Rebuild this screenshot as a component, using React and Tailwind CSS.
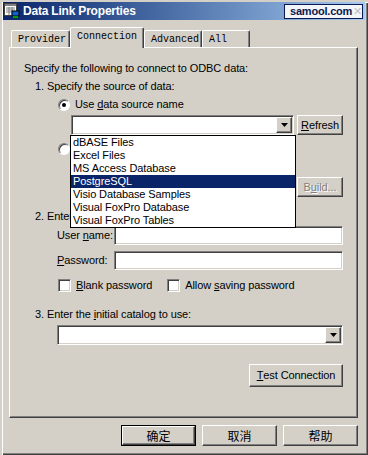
import React from 'react';

const sunken = 'border border-t-[#808080] border-l-[#808080] border-b-white border-r-white shadow-[inset_1px_1px_0_#404040,inset_-1px_-1px_0_#d4d0c8]';
const raised = 'border border-t-white border-l-white border-b-[#404040] border-r-[#404040] shadow-[inset_-1px_-1px_0_#808080]';

const U = ({ children }) => <span className="underline underline-offset-[1px]">{children}</span>;

const DropButton = () => (
  <div className={`w-[16px] h-[16px] mr-[1px] flex items-center justify-center bg-[#d4d0c8] ${raised}`}>
    <svg width="7" height="4" viewBox="0 0 7 4"><path d="M0 0h7L3.5 4z" fill="#000" /></svg>
  </div>
);

const Combo = ({ className }) => (
  <div className={`h-[20px] bg-white flex items-center justify-end ${sunken} ${className}`}>
    <DropButton />
  </div>
);

const Radio = ({ checked }) => (
  <div className="w-[12px] h-[12px] rounded-full bg-white border border-t-[#808080] border-l-[#808080] border-b-white border-r-white flex items-center justify-center shadow-[inset_1px_1px_0_#404040]">
    {checked && <div className="w-[4px] h-[4px] rounded-full bg-black" />}
  </div>
);

const Check = () => <div className={`w-[13px] h-[13px] bg-white ${sunken}`} />;

const Btn = ({ children, className, disabled }) => (
  <div className={`flex items-center justify-center bg-[#d4d0c8] ${raised} ${className} ${disabled ? 'text-[#808080] [text-shadow:1px_1px_0_#fff]' : ''}`}>
    {children}
  </div>
);

const Tab = ({ label, active, w }) => (
  <div
    className={`${w} flex items-center bg-[#d4d0c8] border-t border-l border-t-white border-l-white border-r border-r-[#404040] shadow-[inset_-1px_0_0_#808080] rounded-tl-[2px] rounded-tr-[2px] ${
      active ? 'h-[21px] -mb-px z-10 pl-[6px] pb-[3px]' : 'h-[17px] pl-[6px]'
    }`}
  >
    {label}
  </div>
);

const items = [
  'dBASE Files',
  'Excel Files',
  'MS Access Database',
  'PostgreSQL',
  'Visio Database Samples',
  'Visual FoxPro Database',
  'Visual FoxPro Tables',
];

export default function App() {
  return (
    <div
      className="relative w-[368px] h-[455px] overflow-hidden bg-[#d4d0c8] text-[11px] leading-[13px] tracking-[-0.1px] text-black shadow-[inset_2px_2px_0_#d4d0c8,inset_3px_3px_0_#fff,inset_-1px_-1px_0_#404040,inset_-2px_-2px_0_#808080]"
      style={{ fontFamily: '"Liberation Sans", Arial, sans-serif' }}
    >
      {/* title bar */}
      <div className="mt-[2px] mx-[3px] h-[18px] flex items-center bg-gradient-to-r from-[#0a246a] to-[#a6caf0] tracking-normal">
        <svg width="16" height="16" viewBox="0 0 16 16" className="ml-[1px]">
          <rect x="0.5" y="0.5" width="12" height="12" fill="#fff" stroke="#404040" />
          <rect x="1" y="1" width="11" height="2" fill="#808080" />
          <path d="M2 5h9M2 7h9M2 9h9M5 4v8M8 4v8" stroke="#808080" strokeWidth="1" />
          <rect x="8" y="8" width="7" height="5" fill="#1060d0" stroke="#000" strokeWidth="1" />
          <rect x="9" y="13" width="5" height="2" fill="#00a000" />
        </svg>
        <span className="ml-[3px] text-white font-bold text-[12px] tracking-[-0.2px]">Data Link Properties</span>
        <div className="ml-auto mr-[2px] w-[79px] h-[15px] bg-[#f4f5f8] border border-[#0a1a50] flex items-center pl-[5px] overflow-hidden">
          <span className="font-bold text-[11px] text-[#0a1a50] tracking-[-0.2px]">samool.com</span>
          <span className="ml-[1px] text-[#c0c0c0] text-[11px] leading-none">✕</span>
        </div>
      </div>

      {/* tabs */}
      <div className="flex items-end ml-[11px] mt-[8px] h-[19px] text-[10px] tracking-normal" style={{ fontFamily: '"Liberation Mono", "Courier New", monospace' }}>
        <Tab label="Provider" w="w-[59px]" />
        <Tab label="Connection" w="w-[74px]" active />
        <Tab label="Advanced" w="w-[58px]" />
        <Tab label="All" w="w-[48px]" />
      </div>

      {/* panel */}
      <div className="relative ml-[9px] w-[349px] h-[371px] border border-t-white border-l-white border-b-[#404040] border-r-[#404040] shadow-[inset_-1px_-1px_0_#808080]">
        <div className="ml-[14px] mt-[14px]">Specify the following to connect to ODBC data:</div>
        <div className="ml-[25px] mt-[5px]">1. Specify the source of data:</div>
        <div className="ml-[48px] mt-[5px] flex items-center gap-[5px]">
          <Radio checked />
          <span>Use <U>d</U>ata source name</span>
        </div>
        <div className="ml-[61px] mt-[4px] flex gap-[3px]">
          <Combo className="w-[223px]" />
          <Btn className="w-[46px] h-[20px]"><U>R</U>efresh</Btn>
        </div>
        <div className="ml-[48px] mt-[7px] flex items-center gap-[5px]">
          <Radio />
          <span>Use connection string</span>
        </div>
        <div className="ml-[61px] mt-[22px] flex gap-[3px]">
          <div className={`w-[223px] h-[20px] bg-white ${sunken}`} />
          <Btn className="w-[46px] h-[20px]" disabled>B<U>u</U>ild...</Btn>
        </div>
        <div className="ml-[25px] mt-[13px]">2. Enter information to log on to the server:</div>
        <div className="ml-[47px] mt-[3px] flex items-center">
          <span className="w-[57px]">User <U>n</U>ame:</span>
          <div className={`w-[229px] h-[19px] bg-white ${sunken}`} />
        </div>
        <div className="ml-[47px] mt-[6px] flex items-center">
          <span className="w-[57px]"><U>P</U>assword:</span>
          <div className={`w-[229px] h-[19px] bg-white ${sunken}`} />
        </div>
        <div className="ml-[48px] mt-[9px] flex items-center">
          <Check />
          <span className="ml-[5px]"><U>B</U>lank password</span>
          <div className="ml-[15px]"><Check /></div>
          <span className="ml-[5px]">Allow <U>s</U>aving password</span>
        </div>
        <div className="ml-[25px] mt-[16px]">3. Enter the <U>i</U>nitial catalog to use:</div>
        <Combo className="ml-[47px] mt-[4px] w-[286px]" />
        <Btn className="ml-[239px] mt-[19px] w-[94px] h-[23px]"><U>T</U>est Connection</Btn>
      </div>

      {/* bottom buttons */}
      <div className="mt-[7px] flex text-[12px] tracking-normal" style={{ fontFamily: '"Noto Sans CJK SC", "Liberation Sans", sans-serif' }}>
        <div className="ml-[121px] w-[75px] h-[21px] border border-black">
          <Btn className="w-full h-full">确定</Btn>
        </div>
        <Btn className="ml-[6px] w-[75px] h-[21px]">取消</Btn>
        <Btn className="ml-[6px] w-[75px] h-[21px]">帮助</Btn>
      </div>

      {/* open dropdown list */}
      <div className="absolute left-[70px] top-[135px] w-[226px] bg-white border border-black">
        {items.map((it) => (
          <div
            key={it}
            className={`h-[13px] pl-[2px] leading-[13px] ${it === 'PostgreSQL' ? 'bg-[#0a246a] text-white' : ''}`}
          >
            {it}
          </div>
        ))}
      </div>
    </div>
  );
}
